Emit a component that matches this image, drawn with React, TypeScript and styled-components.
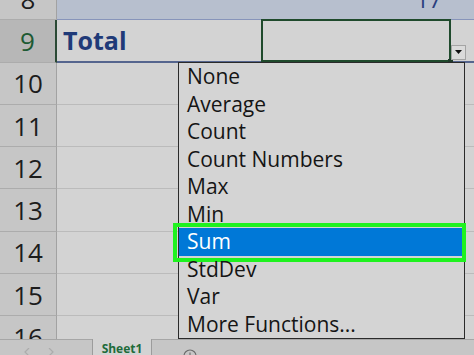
import React from "react";
import styled, { createGlobalStyle, css } from "styled-components";

const Global = createGlobalStyle`
  html, body { margin: 0; padding: 0; background: #d3d3d3; }
  body { width: 474px; height: 355px; overflow: hidden; font-family: "Open Sans", "Noto Sans", sans-serif; }
`;

const Page = styled.div`
  width: 474px;
  height: 355px;
  display: flex;
  flex-direction: column;
  overflow: hidden;
  background: #d3d3d3;
`;

const Sheet = styled.div`
  position: relative;
  height: 339px;
  flex: none;
  overflow: hidden;
`;

const Rows = styled.div`
  display: flex;
  flex-direction: column;
  margin-top: -22px;
`;

const Row = styled.div`
  display: grid;
  grid-template-columns: 57px 205px 189px 1fr;
  height: 42.3px;
  flex: none;
`;

const Header = styled.div<{ $active?: boolean }>`
  box-sizing: border-box;
  display: flex;
  align-items: center;
  justify-content: center;
  font-size: 26px;
  color: #1c1c1c;
  background: #c6c6c6;
  border-right: 1px solid #a2a2a2;
  border-bottom: 1px solid #acacac;
  ${(p) =>
    p.$active &&
    css`
      background: #b7b7b7;
      color: #1d5a33;
      border-right: 2px solid #2b4a35;
    `}
`;

type Tone = "plain" | "band" | "total";

const Cell = styled.div<{ $tone?: Tone; $align?: "left" | "right" }>`
  position: relative;
  box-sizing: border-box;
  display: flex;
  align-items: center;
  justify-content: ${(p) => (p.$align === "right" ? "flex-end" : "flex-start")};
  background: #d3d3d3;
  border-bottom: 1px solid #bbbbbb;
  ${(p) =>
    p.$tone === "band" &&
    css`
      background: #b7bfce;
      border-bottom: 1px solid #8794ba;
    `}
  ${(p) =>
    p.$tone === "total" &&
    css`
      border-bottom: 2px solid #55658e;
    `}
`;

const TotalLabel = styled.span`
  padding-left: 6px;
  font-size: 25px;
  font-weight: 700;
  color: #1f3a78;
`;

const Value = styled.span`
  padding-right: 9px;
  font-size: 23px;
  color: #2b3f7e;
`;

const SelectedFrame = styled.div`
  position: absolute;
  left: -1px;
  right: 0;
  top: -1px;
  bottom: -1px;
  border: 2px solid #1f4a2c;
  box-sizing: border-box;
  z-index: 1;
`;

const FillHandle = styled.div`
  position: absolute;
  right: -2px;
  bottom: -3px;
  width: 5px;
  height: 5px;
  background: #1f3a2a;
  z-index: 1;
`;

const DropButton = styled.div`
  position: absolute;
  right: -15px;
  bottom: 1px;
  width: 15px;
  height: 15px;
  box-sizing: border-box;
  background: #dadada;
  border: 1px solid #a4a4a4;
  display: flex;
  align-items: center;
  justify-content: center;
  z-index: 1;
`;

const List = styled.ul`
  position: absolute;
  left: 178px;
  top: 62px;
  width: 287px;
  height: 277px;
  box-sizing: border-box;
  margin: 0;
  padding: 0;
  list-style: none;
  background: #d4d4d4;
  border: 1px solid #2a2a2a;
  z-index: 2;
`;

const Item = styled.li<{ $active?: boolean }>`
  position: relative;
  height: 27.5px;
  line-height: 27.5px;
  padding-left: 8px;
  font-size: 21px;
  color: #151515;
  white-space: nowrap;
  ${(p) =>
    p.$active &&
    css`
      background: #0078d7;
      color: #ffffff;
      &::after {
        content: "";
        position: absolute;
        left: -6px;
        top: -5px;
        right: -2px;
        bottom: -6.5px;
        border: 4.5px solid #1ff21f;
        pointer-events: none;
      }
    `}
`;

const TabBar = styled.div`
  display: flex;
  height: 16px;
  flex: none;
  overflow: hidden;
  background: #c6c6c6;
`;

const NavArea = styled.div`
  width: 92px;
  box-sizing: border-box;
  border-top: 1px solid #a6a6a6;
  display: flex;
  align-items: flex-start;
  padding: 8px 0 0 24px;
  gap: 18px;
`;

const Tab = styled.div`
  width: 60px;
  box-sizing: border-box;
  background: #d3d3d3;
  border-left: 1px solid #9c9c9c;
  border-right: 1px solid #9c9c9c;
  text-align: center;
  font-size: 12px;
  font-weight: 700;
  line-height: 20px;
  color: #1e6b3a;
`;

const TabRest = styled.div`
  flex: 1;
  border-top: 1px solid #a6a6a6;
  padding: 6px 0 0 31px;
`;

const items = [
  "None",
  "Average",
  "Count",
  "Count Numbers",
  "Max",
  "Min",
  "Sum",
  "StdDev",
  "Var",
  "More Functions...",
];

const Arrow = ({ dir }: { dir: "l" | "r" }) => (
  <svg width="6" height="8" viewBox="0 0 6 8">
    <path d={dir === "l" ? "M5 0 L1 4 L5 8" : "M1 0 L5 4 L1 8"} fill="none" stroke="#acacac" strokeWidth="1.2" />
  </svg>
);

export default function App() {
  const plainRows = [10, 11, 12, 13, 14, 15, 16];
  return (
    <>
      <Global />
      <Page>
        <Sheet>
          <Rows>
            <Row>
              <Header>8</Header>
              <Cell $tone="band" />
              <Cell $tone="band" $align="right">
                <Value>17</Value>
              </Cell>
              <Cell $tone="band" />
            </Row>
            <Row>
              <Header $active>9</Header>
              <Cell $tone="total">
                <TotalLabel>Total</TotalLabel>
              </Cell>
              <Cell $tone="total">
                <SelectedFrame />
                <FillHandle />
                <DropButton>
                  <svg width="7" height="4" viewBox="0 0 7 4">
                    <path d="M0 0 H7 L3.5 4 Z" fill="#111" />
                  </svg>
                </DropButton>
              </Cell>
              <Cell $tone="total" />
            </Row>
            {plainRows.map((n) => (
              <Row key={n}>
                <Header>{n}</Header>
                <Cell />
                <Cell />
                <Cell />
              </Row>
            ))}
          </Rows>
          <List>
            {items.map((t) => (
              <Item key={t} $active={t === "Sum"}>
                {t}
              </Item>
            ))}
          </List>
        </Sheet>
        <TabBar>
          <NavArea>
            <Arrow dir="l" />
            <Arrow dir="r" />
          </NavArea>
          <Tab>Sheet1</Tab>
          <TabRest>
            <svg width="14" height="14" viewBox="0 0 14 14">
              <circle cx="7" cy="7" r="6" fill="none" stroke="#6a6a6a" strokeWidth="1.1" />
              <path d="M7 3.5 V10.5 M3.5 7 H10.5" stroke="#6a6a6a" strokeWidth="1.1" />
            </svg>
          </TabRest>
        </TabBar>
      </Page>
    </>
  );
}
